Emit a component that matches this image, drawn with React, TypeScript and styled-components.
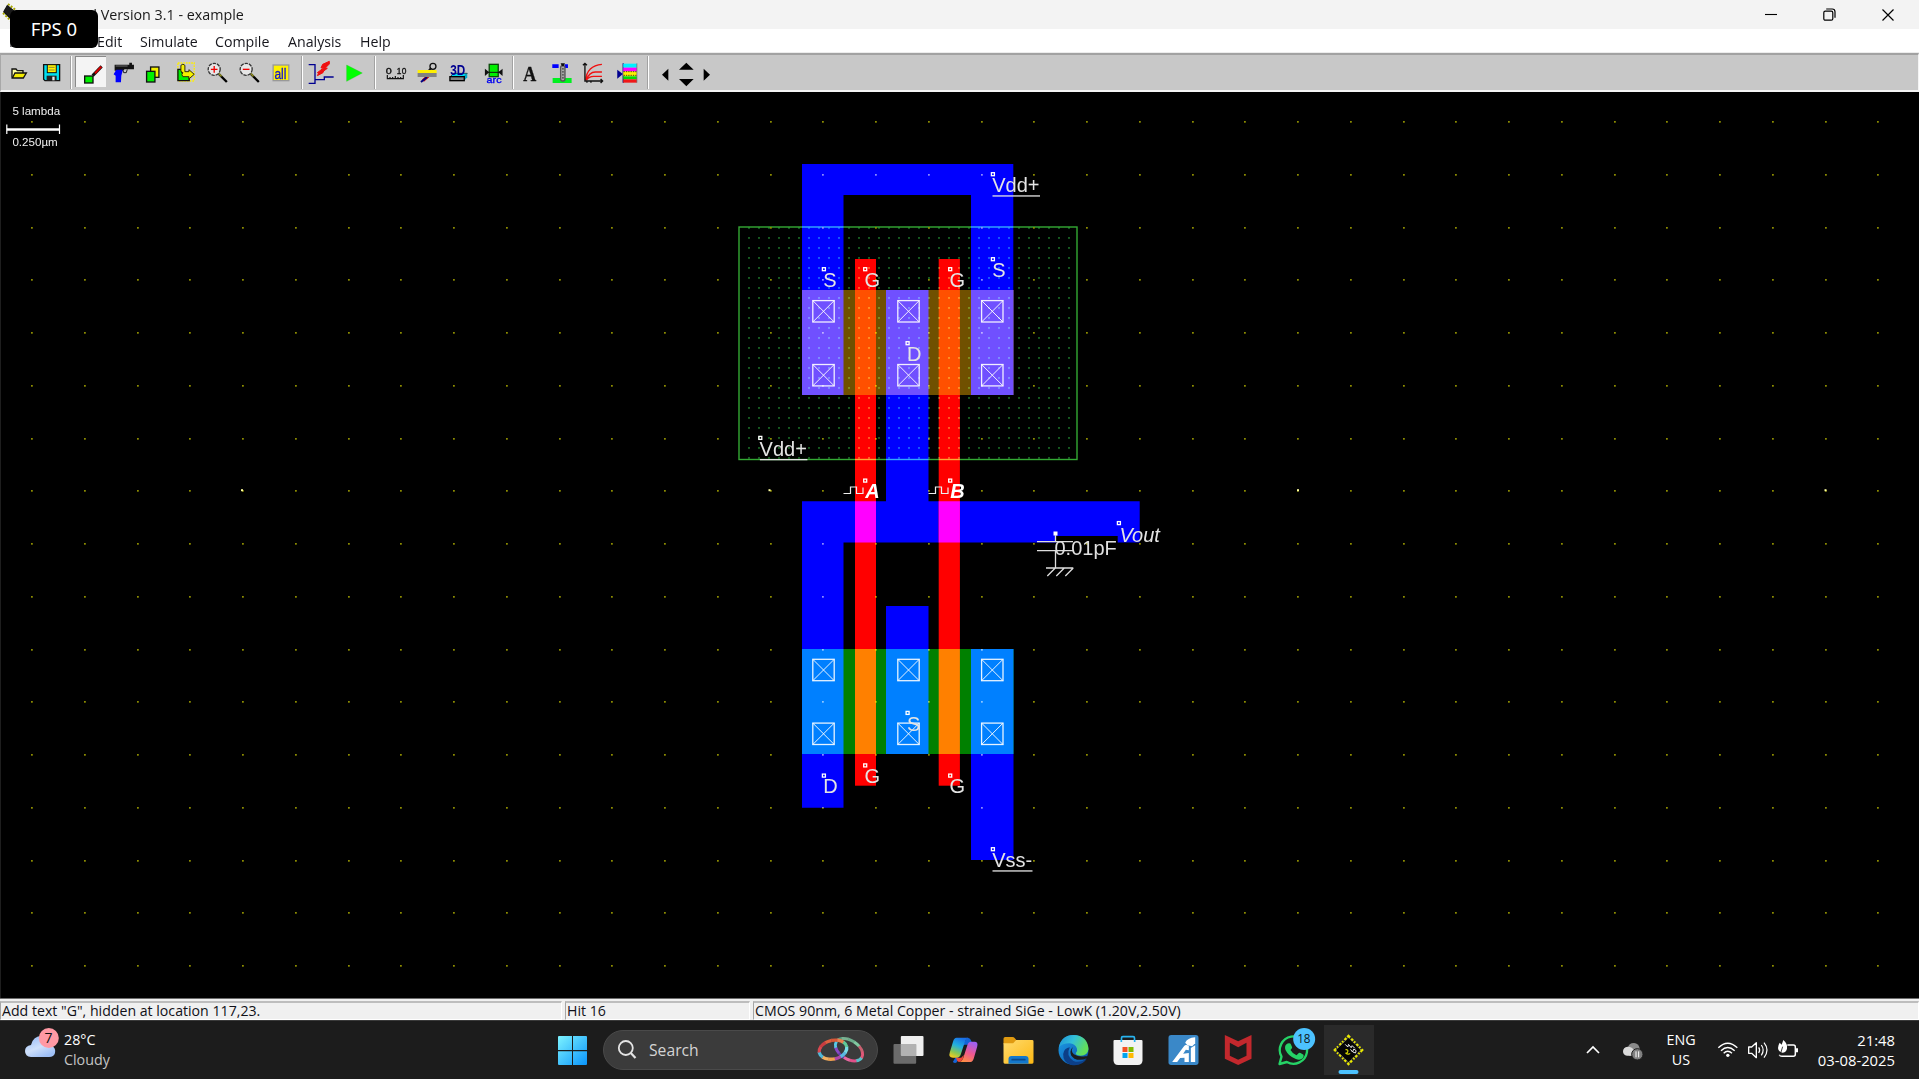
import React from "react";
import styled, { createGlobalStyle, css } from "styled-components";

const UI = `"Open Sans", "Noto Sans", sans-serif`;
const ARIAL = `"Liberation Sans", Arial, sans-serif`;

const Global = createGlobalStyle`
  *, *::before, *::after { box-sizing: border-box; }
  html, body { margin: 0; padding: 0; background: #000; overflow: hidden; }
`;

const Screen = styled.div`
  position: relative;
  width: 1919px;
  height: 1079px;
  display: flex;
  flex-direction: column;
  font-family: ${UI};
  overflow: hidden;
`;

/* ---------- title bar ---------- */
const TitleBar = styled.header`
  height: 29px;
  background: #f3f3f3;
  display: flex;
  align-items: center;
  padding: 0 2px 0 1px;
`;
const TitleText = styled.span`
  flex: 1;
  margin-left: 10px;
  font-size: 14.3px;
  line-height: 29px;
  color: #191919;
  white-space: pre;
`;
const WindowButton = styled.div`
  width: 58.5px;
  height: 29px;
  display: flex;
  align-items: center;
  justify-content: center;
`;
const FpsBadge = styled.div`
  position: absolute;
  left: 10px;
  top: 10px;
  width: 88px;
  height: 38px;
  border-radius: 6px;
  background: #000;
  color: #fff;
  font-family: "Noto Sans", sans-serif;
  font-size: 18.5px;
  line-height: 38px;
  text-align: center;
`;

/* ---------- menu ---------- */
const MenuBar = styled.nav`
  height: 24px;
  background: #fff;
  border-bottom: 1px solid #ececec;
  display: flex;
  padding-left: 9px;
`;
const MenuItem = styled.span<{ $w: number }>`
  width: ${(p) => p.$w}px;
  font-size: 14.2px;
  line-height: 25px;
  color: #16161c;
  white-space: pre;
`;

/* ---------- toolbar ---------- */
const ToolBar = styled.div`
  height: 39px;
  background: #c8c8c8;
  border-top: 2px solid #a2a2a2;
  border-bottom: 2px solid #f4f4f4;
  border-left: 1px solid #a8a8a8;
  border-right: 1px solid #f4f4f4;
  display: flex;
  align-items: stretch;
  padding-left: 2px;
`;
const ToolGroup = styled.div<{ $w: number }>`
  width: ${(p) => p.$w}px;
  display: flex;
`;
const Tool = styled.div<{ $w?: number; $active?: boolean }>`
  width: ${(p) => p.$w ?? 31.7}px;
  height: 35px;
  ${(p) =>
    p.$active &&
    css`
      background: linear-gradient(#8a8a8a 0 1px, transparent 1px),
        linear-gradient(90deg, #8a8a8a 0 1px, #f4f4f4 1px 31px, transparent 31px);
      background-size: 31px 31px;
      background-position: 0 1px;
      background-repeat: no-repeat;
    `}
  svg { display: block; overflow: visible; }
`;
const Divider = styled.div<{ $w: number }>`
  width: ${(p) => p.$w}px;
  display: flex;
  justify-content: center;
  &::before {
    content: "";
    width: 2px;
    margin: 1px 0;
    border-left: 1px solid #a2a2a2;
    border-right: 1px solid #fff;
  }
`;
const TightGroup = styled.div`
  display: flex;
  margin-left: -4px;
`;

/* ---------- canvas ---------- */
const Canvas = styled.main`
  height: 906px;
  background: #000;
  border-left: 1px solid #1e1e1e;
  svg { display: block; margin-left: -1px; }
`;

/* ---------- status ---------- */
const StatusBar = styled.footer`
  height: 23px;
  background: #f0f0f0;
  border-top: 1px solid #6c6c6c;
  border-bottom: 1px solid #3a3a3a;
  padding-top: 2px;
  display: flex;
  gap: 3px;
`;
const Pane = styled.div<{ $w?: number }>`
  ${(p) => (p.$w ? `width: ${p.$w}px;` : "flex: 1;")}
  height: 19px;
  border-top: 2px solid #bdbdbd;
  border-left: 1px solid #a6a6a6;
  border-bottom: 1px solid #fff;
  border-right: 1px solid #fff;
  padding-left: 1px;
  font-size: 14.15px;
  line-height: 15px;
  color: #101018;
  white-space: pre;
`;

/* ---------- taskbar ---------- */
const TaskBar = styled.div`
  height: 58px;
  background: #1c1c1c;
  display: flex;
  align-items: stretch;
  color: #fff;
  svg { display: block; overflow: visible; flex: none; }
`;
const Weather = styled.div`
  width: 544px;
  padding-left: 24px;
  display: flex;
  gap: 4px;
`;
const TwoLines = styled.div<{ $align?: string; $w?: number; $size?: number }>`
  ${(p) => p.$w && `width: ${p.$w}px;`}
  padding-top: 9px;
  display: flex;
  flex-direction: column;
  text-align: ${(p) => p.$align ?? "left"};
  font-size: ${(p) => p.$size ?? 14.3}px;
  line-height: 20px;
  white-space: nowrap;
`;
const Dim = styled.span`
  color: #c4c4c4;
`;
const SearchBox = styled.div`
  width: 275px;
  height: 40px;
  margin: 9px 3.5px 0 1px;
  border-radius: 20px;
  background: #3b3b3b;
  border: 1px solid #4a4a4a;
  display: flex;
  align-items: center;
  padding: 0 12px 0 13px;
`;
const SearchText = styled.span`
  flex: 1;
  margin-left: 12px;
  font-size: 15.7px;
  color: #d4d4d4;
`;
const TaskSlot = styled.div<{ $active?: boolean }>`
  width: 55px;
  height: 58px;
  position: relative;
  left: -0.5px;
  ${(p) =>
    p.$active &&
    css`
      background: linear-gradient(#2a2a2a, #2a2a2a) center 4px / 50px 50px no-repeat;
    `}
`;
const Tray = styled.div`
  margin-left: auto;
  display: flex;
  padding-right: 24px;
`;

type ArtProps = { x: number; children: React.ReactNode };

/* toolbar art is laid on a grid of three units to the pixel */
const ToolArt = ({ x, children }: ArtProps) => (
  <svg width="31.7" height="35" viewBox={`${x * 3} 165 95.1 105`}>
    {children}
  </svg>
);
const ToolArtB = ({ x, children }: ArtProps) => (
  <svg width="31.7" height="35" viewBox={`${x * 3 - 1140} 45 95.1 105`}>
    {children}
  </svg>
);
const TaskArt = ({ x, w = 55, ox = 2940, children }: ArtProps & { w?: number; ox?: number }) => (
  <svg width={w} height="58" viewBox={`${x * 3 - ox} 93 ${w * 3} 174`}>
    {children}
  </svg>
);
const TrayArt = ({ x, w, children }: ArtProps & { w: number }) => (
  <svg width={w} height="58" viewBox={`${x * 3 - 4680} 123 ${w * 3} 174`}>
    {children}
  </svg>
);

const Magnifier = ({ cx, plus }: { cx: number; plus?: boolean }) => (
  <g>
    <path d={`M${cx + 14} 222L${cx + 38} 246`} stroke="#000" strokeWidth="7" />
    <path d={`M${cx + 12} 219L${cx + 22} 229`} stroke="#8a8a20" strokeWidth="5" />
    <circle cx={cx} cy="208" r="18" fill="#e6e6e6" stroke="#333" strokeWidth="4" strokeDasharray="10 3" />
    <path d={`M${cx - 10} 208h20${plus ? `M${cx} 198v20` : ""}`} stroke="#f00000" strokeWidth="4" />
  </g>
);

const EditTools = () => (
  <>
    <Tool $active>
      <ToolArt x={75}>
        <rect x="254" y="228" width="25" height="21" fill="#00f000" stroke="#111" strokeWidth="4" />
        <path d="M278 227L305 199" stroke="#111" strokeWidth="9" />
        <path d="M285 220L304 200" stroke="#e00000" strokeWidth="6" />
      </ToolArt>
    </Tool>
    <Tool>
      <ToolArt x={106.7}>
        <path d="M343 194h44v-6h8v6h6v14h-28l-6 4h-24z" fill="#111" />
        <path d="M348 209h20l-5 18-1 20h-16v-20l-6-4z" fill="#0000ff" />
        <path d="M368 210l2 8h8l3-10" fill="none" stroke="#222" strokeWidth="3" />
        <path d="M346 198h36" stroke="#707070" strokeWidth="3" />
      </ToolArt>
    </Tool>
    <Tool>
      <ToolArt x={138.4}>
        <rect x="453" y="201" width="25" height="31" fill="#f4f000" stroke="#111" strokeWidth="4" />
        <rect x="441" y="214" width="25" height="32" fill="#00f000" stroke="#111" strokeWidth="4" />
      </ToolArt>
    </Tool>
    <Tool>
      <ToolArt x={170.1}>
        <rect x="534" y="189" width="49" height="54" fill="none" stroke="#fff000" strokeWidth="4" strokeDasharray="5 3" />
        <path d="M534 208h12v10h22v24h-34z" fill="#00f000" stroke="#111" strokeWidth="4" />
        <path d="M543 196q6-7 12 0v19h12v-6l16 14-16 14v-7h-18q-6-6 0-12l-6-4z" fill="#f4f000" stroke="#332f00" strokeWidth="3" />
      </ToolArt>
    </Tool>
    <Tool>
      <ToolArt x={201.8}>
        <Magnifier cx={642} plus />
      </ToolArt>
    </Tool>
    <Tool>
      <ToolArt x={233.5}>
        <Magnifier cx={740} />
      </ToolArt>
    </Tool>
    <Tool>
      <ToolArt x={265.2}>
        <rect x="820" y="195" width="47" height="47" fill="#fff200" stroke="#999" strokeWidth="4" />
        <text x="824" y="237" fontFamily="Liberation Sans, sans-serif" fontWeight="400" fontSize="44" textLength="36" lengthAdjust="spacingAndGlyphs" fill="#1414d0" stroke="#1414d0" strokeWidth="1">
          all
        </text>
      </ToolArt>
    </Tool>
  </>
);

const AnalysisTools = () => (
  <>
    <Tool>
      <ToolArtB x={380}>
        <g fill="none" stroke="#111">
          <path d="M22 105v11h48v-11M30 116v-5M38 116v-5M46 116v-8M54 116v-5M62 116v-5" strokeWidth="3.500" />
        </g>
        <text x="17" y="101" fontFamily="Liberation Sans, sans-serif" fontSize="25" textLength="18" lengthAdjust="spacingAndGlyphs" fill="#111" stroke="#111">
          0
        </text>
        <text x="50" y="101" fontFamily="Liberation Sans, sans-serif" fontSize="25" textLength="29" fill="#111" stroke="#111">
          10
        </text>
      </ToolArtB>
    </Tool>
    <Tool>
      <ToolArtB x={411.7}>
        <circle cx="158" cy="79" r="9" fill="none" stroke="#111" strokeWidth="4" />
        <path d="M152 84l-8 10" stroke="#111" strokeWidth="6" />
        <path d="M128 122L146 106" stroke="#d00000" strokeWidth="9" />
        <path d="M122 126L140 112" stroke="#000080" strokeWidth="6" />
        <rect x="112" y="90" width="57" height="9" fill="#fff000" />
        <rect x="112" y="99" width="57" height="12" fill="#828282" />
      </ToolArtB>
    </Tool>
    <Tool>
      <ToolArtB x={443.4}>
        <path d="M212 110l10-10h41l-9 10z" fill="#00d8f0" stroke="#111" strokeWidth="2" />
        <path d="M254 110l9-10v12l-9 10z" fill="#00a8c8" />
        <rect x="211" y="110" width="43" height="12" fill="#808080" stroke="#000" strokeWidth="4" />
        <text x="212" y="105" fontFamily="Liberation Sans, sans-serif" fontWeight="700" fontSize="45" textLength="45" lengthAdjust="spacingAndGlyphs" fill="#000090">
          3D
        </text>
      </ToolArtB>
    </Tool>
    <Tool>
      <ToolArtB x={475.1}>
        <rect x="328" y="73" width="27" height="37" fill="#00f000" stroke="#0c4a0c" strokeWidth="4" />
        <path d="M315 86l13 11-13 11zM368 86l-13 11 13 11z" fill="#111" />
        <path d="M322 97h38" stroke="#111" strokeWidth="3" />
        <text x="320" y="128" fontFamily="Liberation Sans, sans-serif" fontSize="29" textLength="45" lengthAdjust="spacingAndGlyphs" fill="#0000f0" stroke="#0000f0" strokeWidth="1">
          arc
        </text>
      </ToolArtB>
    </Tool>
  </>
);

const ViewTools = () => (
  <>
    <Tool>
      <ToolArtB x={514}>
        <text x="430" y="122" fontFamily="Liberation Serif, serif" fontWeight="700" fontSize="66" textLength="39" lengthAdjust="spacingAndGlyphs" fill="#111" stroke="#111" strokeWidth="1">
          A
        </text>
      </ToolArtB>
    </Tool>
    <Tool>
      <ToolArtB x={545.7}>
        <path d="M516 73h19v11h-19zM553 73h10v11h-10z" fill="#0000ff" />
        <path d="M517 114h57v15h-57z" fill="#00f020" />
        <rect x="541" y="77" width="13" height="46" rx="6" fill="#aaa" stroke="#555" strokeWidth="4" />
        <path d="M541 70h13l-4 9h-5z" fill="#111" />
        <path d="M548 84v34" stroke="#222" strokeWidth="3" strokeDasharray="5 4" />
      </ToolArtB>
    </Tool>
    <Tool>
      <ToolArtB x={577.4}>
        <g fill="none" stroke="#f01010" strokeWidth="4">
          <path d="M618 121q4-44 49-48M619 121q10-25 28-25h20M620 121q8-12 22-12h25" />
        </g>
        <path d="M616 70v53h52M610 76l6-6 6 6M663 117l6 6-6 6M622 123v5M634 123v5" fill="none" stroke="#111" strokeWidth="4" />
      </ToolArtB>
    </Tool>
    <Tool>
      <ToolArtB x={609.1}>
        <path d="M730 70v58" stroke="#0c1480" strokeWidth="4" />
        <path d="M712 89l17 13-17 14z" fill="#000090" />
        <path d="M730 71h41v12h-41z" fill="#00f0ff" />
        <path d="M730 83h41v11h-41z" fill="#ff00ff" />
        <path d="M730 94h41v15h-41z" fill="#fff000" />
        <path d="M730 109h41v9h-41z" fill="#00e000" />
        <path d="M730 118h41v10h-41z" fill="#f01818" />
        <path d="M731 95h40M731 106h40" stroke="#222" strokeWidth="2.500" strokeDasharray="4 3" />
        <path d="M771 70v58" stroke="#666" strokeWidth="2" />
      </ToolArtB>
    </Tool>
  </>
);

/* ---------- layout drawing ---------- */
const cols = Array.from({ length: 36 }, (_, i) => 32 + i * 52.75);
const rows = Array.from({ length: 17 }, (_, i) => 122.2 + i * 52.75);
const wellCols = Array.from({ length: 33 }, (_, i) => 749 + i * 10);
const wellRows = Array.from({ length: 24 }, (_, i) => 228 + i * 10);

const Contact = ({ x, y }: { x: number; y: number }) => (
  <g stroke="#fff" fill="none" strokeOpacity="0.9">
    <rect x={x - 10.7} y={y - 10.7} width="21.4" height="21.4" strokeWidth="1.3" />
    <path d={`M${x - 10.5} ${y - 10.5}l21 21m0-21l-21 21`} strokeWidth="1" />
  </g>
);

type LabelProps = { x: number; y: number; t: string; w?: number; dx?: number; dy?: number; italic?: boolean; bold?: boolean };
const Label = ({ x, y, t, w, dx = -0.8, dy = 17.6, italic, bold }: LabelProps) => (
  <g>
    <rect x={x - 1.6} y={y - 1.6} width="3" height="3" fill="none" stroke="#fff" strokeWidth="1.3" />
    <text x={x + dx} y={y + dy} fontSize="20" fontFamily={ARIAL} fill={bold ? "#fff" : "#e4e4e4"} fontStyle={italic ? "italic" : "normal"} fontWeight={bold ? 700 : 400}>
      {t}
    </text>
    {w && <rect x={x - 0.5} y={y + 21} width={w} height="1.3" fill="#e4e4e4" />}
  </g>
);

const Pulse = ({ x }: { x: number }) => (
  <path d={`M${x} 493.5h7v-6.5h6v6.5h6.5v-6`} fill="none" stroke="#eee" strokeWidth="1.2" />
);

const Layout = () => (
  <svg width="1919" height="906" viewBox="0 92 1919 906">
    <g fill="#0000ff">
      <path d="M802 164h211.300v126h-42.300v-95h-127.500v95h-41.500z" />
      <path d="M886 395h42.500v106.300h211.200v41.300h-22v-6.600h-61.700v6.600h-212.500v106.400h-41.500v-147.700h84z" />
      <path d="M886 606h42.500v43h-42.500zM802 754h41.500v53.700h-41.500zM971 754h42.500v106h-42.500z" />
    </g>
    <g fill="#ff0000">
      <rect x="855" y="259" width="21" height="526.7" />
      <rect x="938.7" y="259" width="21.2" height="526.7" />
    </g>
    <path d="M855 501.300h21v41.300h-21zM938.700 501.300h21.200v41.300h-21.200z" fill="#ff00ff" />
    <rect x="802" y="290" width="211.5" height="105" fill="#705000" />
    <path d="M802 290h41.500v105h-41.500zM886 290h42.500v105h-42.500zM971 290h42.500v105h-42.500z" fill="#7050ff" />
    <path d="M855 290h21v105h-21zM938.700 290h21.200v105h-21.200z" fill="#ff5000" />
    <rect x="802" y="649" width="211.5" height="105" fill="#008000" />
    <path d="M802 649h41.500v105h-41.500zM886 649h42.500v105h-42.500zM971 649h42.500v105h-42.500z" fill="#0080ff" />
    <path d="M855 649h21v105h-21zM938.700 649h21.200v105h-21.200z" fill="#ff8000" />

    <g style={{ mixBlendMode: "screen" }}>
      <g fill="#1c7028">
        {wellRows.map((y) => wellCols.map((x) => <rect key={`${x}-${y}`} x={x - 1} y={y - 0.8} width="2" height="1.5" />))}
      </g>
      <rect x="739" y="227" width="338" height="232.5" fill="none" stroke="#34a834" strokeWidth="1.4" />
      <g fill="#8c8c00">
        {rows.map((y) => cols.map((x) => <rect key={`${x}-${y}`} x={Math.round(x) - 1} y={Math.round(y) - 1} width="1.8" height="1.7" />))}
      </g>
      <g fill="#ffffa0">
        {[242, 769.5, 1298, 1825.5].map((x) => (
          <rect key={x} x={x - 1} y="489.2" width="2" height="2" />
        ))}
      </g>
    </g>

    {[823.5, 908.5, 992.3].map((x) => [311.3, 375.2, 670, 733.8].map((y) => <Contact key={`${x}-${y}`} x={x} y={y} />))}

    <Label x={993} y={174.3} t="Vdd+" w={47.5} dy={18} />
    <Label x={993} y={259.3} t="S" />
    <Label x={824} y={269.3} t="S" />
    <Label x={865.3} y={269.3} t="G" />
    <Label x={950.3} y={269.3} t="G" />
    <Label x={907.7} y={343.3} t="D" />
    <Label x={760.4} y={438} t="Vdd+" w={47.5} dy={18} />
    <Label x={865.3} y={480.7} t="A" italic bold dx={0} />
    <Label x={950.3} y={480.7} t="B" italic bold dx={0} />
    <Pulse x={843.5} />
    <Pulse x={928.5} />
    <Label x={1119} y={523.2} t="Vout" italic dx={0.5} dy={19.2} />
    <Label x={907.7} y={713} t="S" />
    <Label x={824} y={775.7} t="D" />
    <Label x={865.3} y={765.5} t="G" />
    <Label x={950.3} y={775.7} t="G" />
    <Label x={993} y={849.3} t="Vss-" w={40} dy={18} />

    <rect x="1053.5" y="531.5" width="4" height="4" fill="#fff" />
    <path d="M1055.500 535v6.700M1037 541.700h36M1037 550.600h36M1055.500 550.600v17.400M1046 568h27.300M1055.300 568l-8 8M1064.300 568l-8 8M1073.300 568l-8 8" fill="none" stroke="#dedede" strokeWidth="1.3" />
    <text x="1054.5" y="554.7" fontSize="20" fontFamily={ARIAL} fill="#e0e0e0">
      0.01pF
    </text>

    <g fontSize="11.6" fontFamily={ARIAL} fill="#f0f0f0">
      <text x="12.4" y="115.3">5 lambda</text>
      <text x="12.4" y="145.9">0.250µm</text>
    </g>
    <path d="M6.800 129.500h52.500" stroke="#fff" strokeWidth="2.4" />
    <path d="M6.800 124.500v9.500M59.500 124.500v9.500" stroke="#fff" strokeWidth="1.2" />
  </svg>
);

/* ---------- taskbar pieces ---------- */
const Gradients = () => (
  <svg width="0" height="0">
    <defs>
      <linearGradient id="win" gradientUnits="userSpaceOnUse" x1="54" y1="138" x2="141" y2="225">
        <stop offset="0" stopColor="#7df3ff" />
        <stop offset="1" stopColor="#0a94fb" />
      </linearGradient>
      <linearGradient id="cloud" x1="0" y1="0" x2="0.6" y2="1">
        <stop offset="0" stopColor="#8fb6f5" />
        <stop offset="0.6" stopColor="#cfe0fa" />
        <stop offset="1" stopColor="#9fc0f6" />
      </linearGradient>
      <linearGradient id="folder" x1="0" y1="0" x2="1" y2="1">
        <stop offset="0" stopColor="#ffdb6e" />
        <stop offset="1" stopColor="#fdb813" />
      </linearGradient>
      <linearGradient id="edgeTop" x1="0" y1="0" x2="1" y2="0.4">
        <stop offset="0" stopColor="#1c8fd8" />
        <stop offset="0.5" stopColor="#33c0d8" />
        <stop offset="1" stopColor="#62e05a" />
      </linearGradient>
      <linearGradient id="edgeLow" x1="0" y1="0" x2="1" y2="1">
        <stop offset="0" stopColor="#1d9fe8" />
        <stop offset="1" stopColor="#0a4fa8" />
      </linearGradient>
      <linearGradient id="copA" x1="0.6" y1="0" x2="0.2" y2="1">
        <stop offset="0" stopColor="#1a6fe8" />
        <stop offset="0.4" stopColor="#22b0e0" />
        <stop offset="0.75" stopColor="#8cc850" />
        <stop offset="1" stopColor="#f6cc20" />
      </linearGradient>
      <linearGradient id="copB" x1="0.6" y1="0" x2="0.2" y2="1">
        <stop offset="0" stopColor="#a060f0" />
        <stop offset="0.5" stopColor="#f05890" />
        <stop offset="1" stopColor="#ff9040" />
      </linearGradient>
    </defs>
  </svg>
);

/* a woven band: equal arcs of an ellipse, each in its own colour */
const Band = ({ cx, cy, rx, ry, turn, width, colors }: { cx: number; cy: number; rx: number; ry: number; turn: number; width: number; colors: string[] }) => {
  const step = 100 / colors.length;
  return (
    <g transform={`rotate(${turn} ${cx} ${cy})`} fill="none">
      {colors.map((c, i) => (
        <ellipse key={i} cx={cx} cy={cy} rx={rx} ry={ry} pathLength={100} stroke={c} strokeWidth={width} strokeDasharray={`${step + 0.4} ${100 - step - 0.4}`} strokeDashoffset={-i * step} />
      ))}
    </g>
  );
};

const Bracelets = () => (
  <svg width="48" height="28" viewBox="833 141 144 84" fill="none">
    <Band cx={929} cy={182} rx={45} ry={28} turn={32} width={9} colors={["#58c0c8", "#e05088", "#e868a0", "#6a3cb0", "#8848c8", "#58c8e8", "#5a9c80", "#78b090", "#6cae8c", "#80c8a0", "#c86070", "#e05878"]} />
    <Band cx={881} cy={182} rx={42} ry={28} turn={-12} width={10} colors={["#78dce8", "#58b8e0", "#b048a8", "#f0a050", "#f4b060", "#50b8d8", "#d84850", "#c83c40", "#e06040", "#d85838", "#e88050", "#60c898"]} />
  </svg>
);

const TaskIcons = () => (
  <>
    <TaskSlot>
      <TaskArt x={881.5} ox={1620}>
        <rect x="1084" y="138" width="68" height="60" rx="3" fill="#efefef" />
        <rect x="1062" y="162" width="68" height="59" rx="3" fill="#747474" fillOpacity="0.9" />
        <path d="M1084 162h46v36h-43q-3 0-3-3z" fill="#b2b2b2" />
      </TaskArt>
    </TaskSlot>
    <TaskSlot>
      <TaskArt x={936.5} ox={1620}>
        <path d="M1282 143q10 0 13 9l4 12h-22q-9 0-12 10l-11 38q-4 11-14 4z" fill="#1464d8" />
        <path d="M1251 143h36q-7 1-10 10l-13 40q-3 10-12 10h-12q-14 0-9-16l10-33q3-11 10-11z" fill="url(#copA)" />
        <path d="M1293 216h-33q8-2 11-11l13-41q3-9 11-9h10q12 0 8 15l-10 35q-3 11-10 11z" fill="url(#copB)" />
        <path d="M1249 203h16l8-8q-3 20-14 21-5 0-7-6z" fill="#f04838" />
      </TaskArt>
    </TaskSlot>
    <TaskSlot>
      <TaskArt x={991.5}>
        <path d="M72 146q0-5 5-5h22q4 0 7 4l5 6v12h-39z" fill="#e09a10" />
        <path d="M72 160h29l9-10h48q4 0 4 4v63q0 4-4 4h-82q-4 0-4-4z" fill="url(#folder)" />
        <path d="M87 221v-14q0-9 9-9h42q9 0 9 9v14z" fill="#1478cc" />
        <path d="M98 209h38" stroke="#0b4a8c" strokeWidth="5" strokeLinecap="round" />
      </TaskArt>
    </TaskSlot>
    <TaskSlot>
      <TaskArt x={1046.5}>
        <circle cx="282" cy="180" r="45" fill="url(#edgeLow)" />
        <path d="M238 172q8-37 44-37 42 2 45 42-2 20-24 20-16-1-14-8 6-6 3-14-5-14-22-15-22 0-32 12z" fill="url(#edgeTop)" />
        <path d="M271 172q-13 25 10 40 20 10 42-8-14 26-48 21-25-8-24-33 3-18 20-20z" fill="#0c3f88" />
        <path d="M281 171q-9 12 2 22 14 9 34 6l6 0q3 1 0 5-20 10-38 2-14-8-12-22 2-9 8-13z" fill="#1c1c1c" />
      </TaskArt>
    </TaskSlot>
    <TaskSlot>
      <TaskArt x={1101.5}>
        <path d="M426 154v-10q0-4 4-4h31q4 0 4 4v10" fill="none" stroke="#28b4f0" strokeWidth="5" />
        <path d="M402 153q0-3 3-3h81q3 0 3 3v58q0 14-14 14h-59q-14 0-14-14z" fill="#f2f2f2" />
        <path d="M423 150h5v6h-5zM463 150h5v6h-5z" fill="#28b4f0" />
        <rect x="429" y="171" width="15" height="15" fill="#f25022" />
        <rect x="447" y="171" width="15" height="15" fill="#7fba00" />
        <rect x="429" y="189" width="15" height="15" fill="#00a4ef" />
        <rect x="447" y="189" width="15" height="15" fill="#ffb900" />
      </TaskArt>
    </TaskSlot>
    <TaskSlot>
      <TaskArt x={1156.5}>
        <rect x="567" y="135" width="90" height="90" rx="8" fill="#3a88c8" />
        <path d="M578 216l36-48q3-4 7-3l7 2v14l-9-2-8 12 17-2v27h-13v-13l-13 1-9 12z" fill="#fff" />
        <path d="M617 158q6-14 30-16v18l-9 9-14-3z" fill="#fff" />
        <path d="M634 174l13-8v50h-13z" fill="#fff" />
      </TaskArt>
    </TaskSlot>
    <TaskSlot>
      <TaskArt x={1211.5}>
        <path d="M736 135l40 19 40-19v71l-40 19-40-19zM751 158v39l25 12 25-12v-39l-25 14z" fill="#c3282d" fillRule="evenodd" />
      </TaskArt>
    </TaskSlot>
    <TaskSlot>
      <TaskArt x={1266.5}>
        <path d="M900 222l6-22a41 41 0 1 1 16 16z" fill="none" stroke="#25d366" strokeWidth="7" strokeLinejoin="round" />
        <path d="M930 160q3 0 4 3l4 9q0 3-5 8 6 11 18 16l7-7q2-1 5 0l9 5q2 8-6 13-7 4-17 0-22-8-31-27-4-11 3-17 4-4 9-3z" fill="#25d366" />
        <circle cx="974" cy="147" r="33" fill="#4cc2ff" />
        <text x="973" y="160" fontSize="37" fontFamily={UI} textAnchor="middle" textLength="40" lengthAdjust="spacingAndGlyphs" fill="#101820">
          18
        </text>
      </TaskArt>
    </TaskSlot>
    <TaskSlot $active>
      <TaskArt x={1321.5}>
        <path d="M1107 140l39 40-39 40-39-40z" fill="#000" stroke="#e8e800" strokeWidth="10" strokeDasharray="5 5 8 4" />
        <path d="M1107 143l37 37-37 37-38-37z" fill="#050505" stroke="#8a8a8a" strokeWidth="2" strokeDasharray="6 2" />
        <path d="M1097 163l8 8 2-8 8 10 3-6 8 8M1113 178l6 8 4-9 7 5-2 7-8-3" fill="none" stroke="#e8e8e8" strokeWidth="3" />
        <path d="M1098 179q8-1 7 5t-7 5q8 6 14 1" fill="none" stroke="#d8d800" strokeWidth="3.500" />
        <rect x="1077" y="240" width="60" height="12" rx="6" fill="#4cc2ff" />
      </TaskArt>
    </TaskSlot>
  </>
);

const TrayIcons = () => (
  <Tray>
    <TrayArt x={1572} w={41}>
      <path d="M81 219l18-18 18 18" fill="none" stroke="#fff" strokeWidth="5" />
    </TrayArt>
    <TrayArt x={1613} w={48}>
      <path d="M203 205q3-16 19-16 14 1 17 16l4 22h-36z" fill="#8a8a8a" />
      <path d="M201 227q-12-1-12-13t14-14q14 0 20 12l10 15z" fill="#dadada" />
      <circle cx="232" cy="223" r="17" fill="#808080" stroke="#1c1c1c" strokeWidth="3" />
      <path d="M228 214v18M236 214v18" stroke="#fff" strokeWidth="3" />
    </TrayArt>
    <TwoLines $w={40} $align="center" $size={14.3}>
      <span>ENG</span>
      <span>US</span>
    </TwoLines>
    <TrayArt x={1701} w={42}>
      <g fill="none" stroke="#fff" strokeWidth="4.200">
        <path d="M475 203q28-27 57 0M483 212q20-19 41 0M491 220q12-12 25 0" />
      </g>
      <circle cx="503.500" cy="226" r="5" fill="#fff" />
    </TrayArt>
    <TrayArt x={1743} w={30}>
      <g fill="none" stroke="#fff" strokeWidth="4">
        <path d="M566 201h9l14-13v45l-14-13h-9z" strokeLinejoin="round" />
        <path d="M596 202q6 8 0 17M604 195q11 15 0 31M612 188q18 22 0 45" strokeWidth="3.600" />
      </g>
    </TrayArt>
    <TrayArt x={1773} w={38}>
      <path d="M682 195h18q6 0 6 6v22q0 6-6 6h-34q-6 0-8-5" fill="none" stroke="#fff" strokeWidth="4.500" />
      <path d="M708 205h6v12h-6z" fill="#fff" />
      <path d="M670 180q14 12 11 26-3 12-14 12-12-3-13-14 0-8 5-16l6 6z" fill="#fff" />
      <path d="M668 200l-8 26" stroke="#1c1c1c" strokeWidth="2.500" />
    </TrayArt>
    <TwoLines $w={84} $align="right" $size={14.8}>
      <span>21:48</span>
      <span>03-08-2025</span>
    </TwoLines>
  </Tray>
);

export default function App() {
  return (
    <Screen>
      <Global />
      <TitleBar>
        <svg width="16" height="29" viewBox="0 0 16 29">
          <path d="M6 5l10 8-5 8-9-9z" fill="#111" />
          <path d="M2 13l9 9M7 4l9 7" stroke="#a8a800" strokeWidth="2" strokeDasharray="2 1.500" />
          <path d="M6.500 5l8.500 7-4 8-8-9z" fill="#1a1a1a" />
        </svg>
        <TitleText>Microwind Version 3.1 - example</TitleText>
        <WindowButton>
          <svg width="12" height="12" viewBox="0 0 12 12">
            <path d="M0 5.500h12" stroke="#000" strokeWidth="1.100" />
          </svg>
        </WindowButton>
        <WindowButton>
          <svg width="13" height="13" viewBox="0 0 13 13" fill="none" stroke="#000" strokeWidth="1.200">
            <rect x="0.800" y="3.200" width="9" height="9" rx="1.500" />
            <path d="M3.200 1h6q2.800 0 2.800 2.800v6" />
          </svg>
        </WindowButton>
        <WindowButton>
          <svg width="12" height="12" viewBox="0 0 12 12">
            <path d="M0.500 0.500l11 11m0-11l-11 11" stroke="#000" strokeWidth="1.200" />
          </svg>
        </WindowButton>
      </TitleBar>
      <MenuBar>
        <MenuItem $w={88}>File</MenuItem>
        <MenuItem $w={43}>Edit</MenuItem>
        <MenuItem $w={75}>Simulate</MenuItem>
        <MenuItem $w={73}>Compile</MenuItem>
        <MenuItem $w={72}>Analysis</MenuItem>
        <MenuItem $w={60}>Help</MenuItem>
      </MenuBar>
      <ToolBar>
        <ToolGroup $w={64}>
          <Tool>
            <ToolArt x={3}>
              <path d="M36 233v-26h12l4 5h17v8" fill="#ffffa0" stroke="#111" strokeWidth="4" />
              <path d="M37 234l8-15h34l-9 15z" fill="#f4ec00" stroke="#111" strokeWidth="4" />
            </ToolArt>
          </Tool>
          <Tool>
            <ToolArt x={34.7}>
              <path d="M130 194h48v48h-44l-4-4z" fill="#00e0f0" stroke="#111" strokeWidth="4" />
              <rect x="141" y="194" width="27" height="24" fill="#fff200" stroke="#111" strokeWidth="3" />
              <path d="M145 202h18M145 210h18" stroke="#555" strokeWidth="2" />
              <rect x="139" y="227" width="30" height="15" fill="#222" />
              <rect x="156" y="230" width="7" height="11" fill="#e8e8e8" />
            </ToolArt>
          </Tool>
        </ToolGroup>
        <Divider $w={8} />
        <ToolGroup $w={222}>
          <EditTools />
        </ToolGroup>
        <Divider $w={9} />
        <ToolGroup $w={63.4}>
          <Tool>
            <ToolArt x={306}>
              <path d="M926 194h19v56h-19M945 239h28v-8h28" fill="none" stroke="#000090" strokeWidth="4" />
              <path d="M988 184l-20 9-5 11 9-1-20 15 4 1-4 8 17-9 2-5 11-8-6-1 12-12z" fill="#f01010" stroke="#f01010" strokeWidth="3" />
            </ToolArt>
          </Tool>
          <Tool>
            <ToolArt x={337.7}>
              <path d="M1039 195l47 24-47 25z" fill="#00ff00" stroke="#1cc01c" strokeWidth="1" />
            </ToolArt>
          </Tool>
        </ToolGroup>
        <Divider $w={10.6} />
        <ToolGroup $w={129}>
          <AnalysisTools />
        </ToolGroup>
        <Divider $w={9} />
        <ToolGroup $w={127}>
          <TightGroup>
            <ViewTools />
          </TightGroup>
        </ToolGroup>
        <Divider $w={7} />
        <ToolGroup $w={80}>
          <svg width="72" height="35" viewBox="817 45 216 105">
            <path d="M866 86v36l-19-18zM972 86v36l19-18zM898 89l22-21 22 21zM898 117l22 22 22-22z" fill="#000" />
          </svg>
        </ToolGroup>
      </ToolBar>
      <Canvas>
        <Layout />
      </Canvas>
      <StatusBar>
        <Pane $w={562}>Add text "G", hidden at location 117,23.</Pane>
        <Pane $w={185}>Hit 16</Pane>
        <Pane>CMOS 90nm, 6 Metal Copper - strained SiGe - LowK (1.20V,2.50V)</Pane>
      </StatusBar>
      <TaskBar>
        <Gradients />
        <Weather>
          <svg width="36" height="58" viewBox="24 1021 36 58">
            <path d="M31 1057q-6-.5-6-6 0-5 6-6 2-9 11-9 9 1 10 10 4 2 3 7-1 4-6 4z" fill="url(#cloud)" />
            <circle cx="48.800" cy="1038" r="10" fill="#ff99a4" />
            <text x="48.500" y="1043" textAnchor="middle" fontSize="14" fontFamily={UI} fill="#111">
              7
            </text>
          </svg>
          <TwoLines>
            <span>28°C</span>
            <Dim>Cloudy</Dim>
          </TwoLines>
        </Weather>
        <svg width="58" height="58" viewBox="12 93 174 174">
          <path d="M54 141q0-3 3-3h39v42H54zM99 138h39q3 0 3 3v39H99zM54 184h42v41H57q-3 0-3-3zM99 184h42v38q0 3-3 3H99z" fill="url(#win)" />
        </svg>
        <SearchBox>
          <svg width="20" height="20" viewBox="0 0 20 20" fill="none" stroke="#e4e4e4" strokeWidth="1.800">
            <circle cx="8.800" cy="8" r="7" />
            <path d="M13.800 13l4.700 5" strokeWidth="2.200" />
          </svg>
          <SearchText>Search</SearchText>
          <Bracelets />
        </SearchBox>
        <TaskIcons />
        <TrayIcons />
      </TaskBar>
      <FpsBadge>FPS 0</FpsBadge>
    </Screen>
  );
}
